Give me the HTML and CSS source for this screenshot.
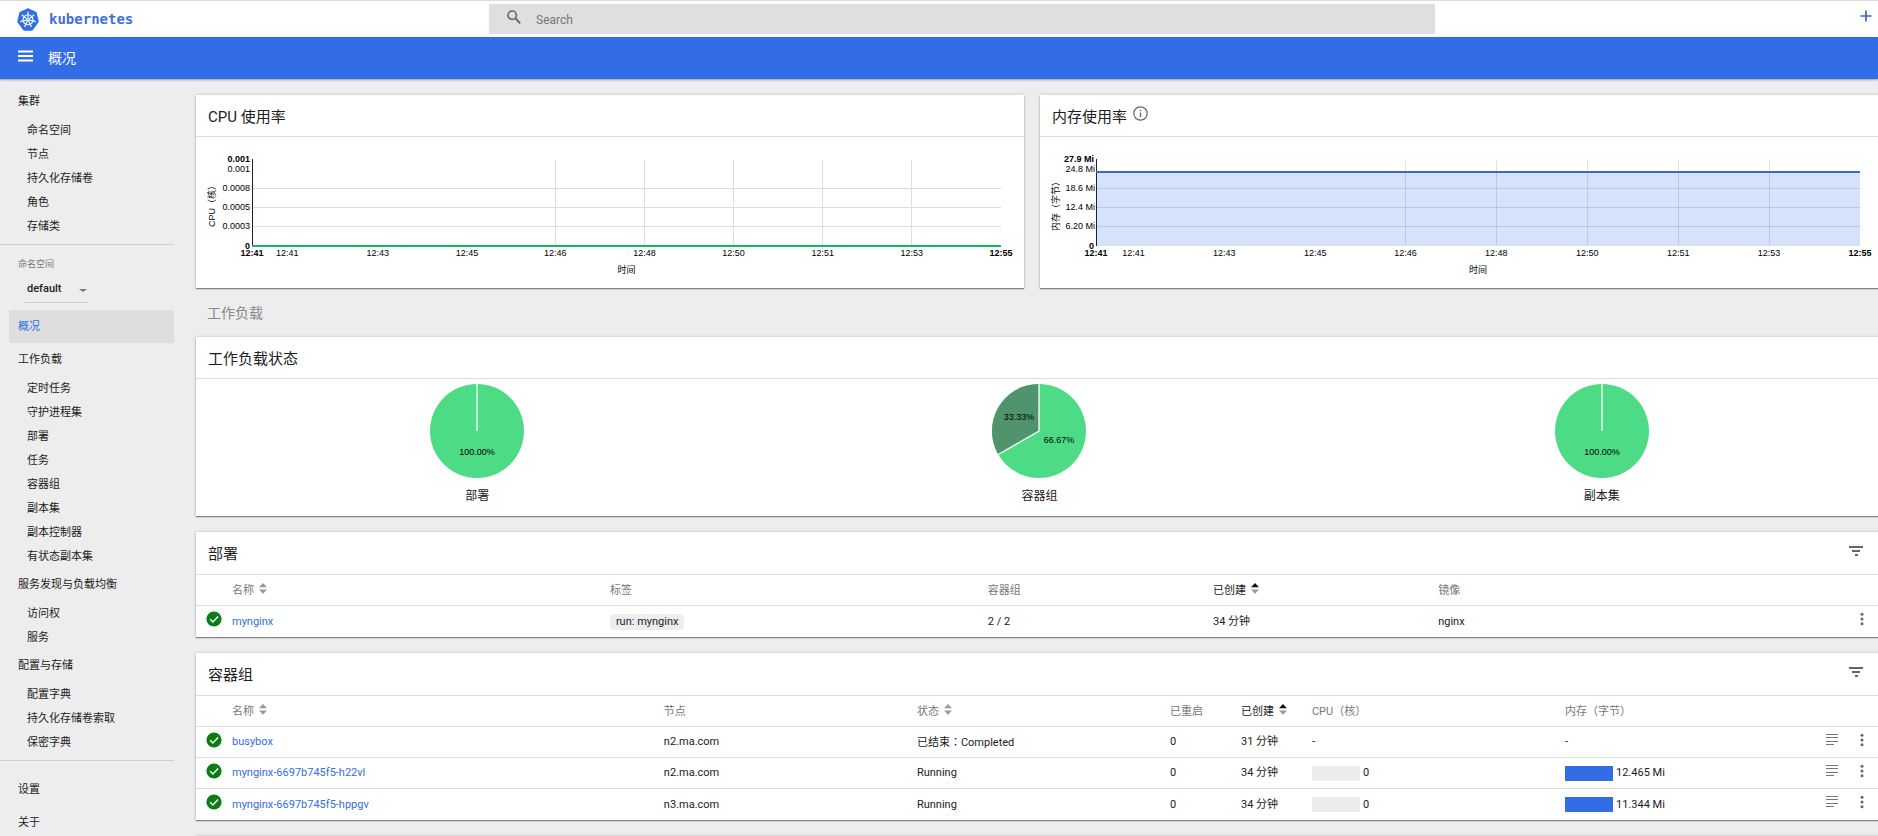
FILE: index.html
```html
<!DOCTYPE html>
<html lang="zh-CN">
<head>
<meta charset="utf-8">
<title>概况 - Kubernetes Dashboard</title>
<link rel="stylesheet" href="styles.css">
</head>
<body>
<svg class="defs" aria-hidden="true">
  <symbol id="i-sort" viewBox="0 0 8 11"><path d="M0 4.2 4 0l4 4.2z"/><path d="M0 6.6h8L4 10.8z"/></symbol>
  <symbol id="i-sort-up" viewBox="0 0 8 11"><path d="M0 4.2 4 0l4 4.2z" fill="#111"/><path d="M0 6.6h8L4 10.8z"/></symbol>
  <symbol id="i-ok" viewBox="0 0 16 16"><circle cx="8" cy="8" r="7.6" fill="#0b7d14"/><path d="M4.2 8.3 6.9 11l5.2-5.4" fill="none" stroke="#fff" stroke-width="1.5"/></symbol>
  <symbol id="i-more" viewBox="0 0 14 14"><g fill="#666"><circle cx="7" cy="2.2" r="1.5"/><circle cx="7" cy="7" r="1.5"/><circle cx="7" cy="11.8" r="1.5"/></g></symbol>
  <symbol id="i-logs" viewBox="0 0 14 14"><path d="M1 1.5h12M1 4.5h12M1 8.5h12M1 11.5h8" stroke="#777" fill="none"/></symbol>
  <symbol id="i-filter" viewBox="0 0 14 14"><path d="M0 3h14M3 7h8M6 11h3" stroke="#666" stroke-width="1.8" fill="none"/></symbol>
</svg>
<div class="app">
  <header class="topbar">
    <a class="brand" href="#">
      <svg class="logo" viewBox="0 0 22 23" aria-hidden="true">
        <path d="M11 .8 19 4.6 21.2 13.6 15.6 21.4Q15 22.2 14 22.2H8Q7 22.2 6.4 21.4L.8 13.6 3 4.6Z" fill="#326de6" stroke="#326de6" stroke-width="1.2" stroke-linejoin="round"/>
        <g stroke="#fff" fill="none" stroke-width="1.1"><circle cx="11" cy="11.8" r="5"/><path d="M11 3.8v6.5M4.8 6.8l5.1 4.1M3.2 13.6l6.4-1.5M7.5 19l2.9-5.9M14.5 19l-2.9-5.9M18.8 13.6l-6.4-1.5M17.2 6.8l-5.1 4.1"/></g>
        <circle cx="11" cy="11.8" r="1.6" fill="#fff"/><circle cx="11" cy="11.8" r=".6" fill="#326de6"/>
      </svg>
      <span>kubernetes</span>
    </a>
    <label class="search">
      <svg viewBox="0 0 14 14" aria-hidden="true"><g fill="none" stroke="#6b6b6b" stroke-width="1.7"><circle cx="5.2" cy="5.2" r="4.2"/><path d="M8.3 8.3 13.2 13.2" stroke-width="2"/></g></svg>
      <input type="search" placeholder="Search" aria-label="Search">
    </label>
    <button class="create" type="button" aria-label="创建"><svg viewBox="0 0 12 12" aria-hidden="true"><path d="M6 .5v11M.5 6h11" stroke="#3764c8" stroke-width="1.7"/></svg></button>
  </header>
  <div class="titlebar">
    <button class="burger" type="button" aria-label="菜单"><svg viewBox="0 0 15 12"><path d="M0 1.5h15M0 6h15M0 10.5h15" stroke="#fff" stroke-width="2"/></svg></button>
    <h1>概况</h1>
  </div>
  <div class="body">
    <nav class="side">
      <a class="group" href="#">集群</a>
      <a class="item" href="#">命名空间</a>
      <a class="item" href="#">节点</a>
      <a class="item" href="#">持久化存储卷</a>
      <a class="item" href="#">角色</a>
      <a class="item" href="#">存储类</a>
      <hr>
      <div class="ns">
        <label for="ns">命名空间</label>
        <div class="select"><select id="ns"><option>default</option></select></div>
      </div>
      <a class="group active" href="#">概况</a>
      <a class="group" href="#">工作负载</a>
      <a class="item" href="#">定时任务</a>
      <a class="item" href="#">守护进程集</a>
      <a class="item" href="#">部署</a>
      <a class="item" href="#">任务</a>
      <a class="item" href="#">容器组</a>
      <a class="item" href="#">副本集</a>
      <a class="item" href="#">副本控制器</a>
      <a class="item" href="#">有状态副本集</a>
      <a class="group" href="#">服务发现与负载均衡</a>
      <a class="item" href="#">访问权</a>
      <a class="item" href="#">服务</a>
      <a class="group" href="#">配置与存储</a>
      <a class="item" href="#">配置字典</a>
      <a class="item" href="#">持久化存储卷索取</a>
      <a class="item" href="#">保密字典</a>
      <hr class="last">
      <a class="group" href="#">设置</a>
      <a class="group" href="#">关于</a>
    </nav>
    <main class="main">
      <div class="charts">
        <section class="card">
          <header class="head"><h2>CPU 使用率</h2></header>
          <svg class="chart">
            <text class="mid" transform="translate(19 67) rotate(-90)">CPU（核）</text>
            <g class="ylab">
              <text class="b" x="54" y="25">0.001</text><text x="54" y="35">0.001</text><text x="54" y="54">0.0008</text><text x="54" y="73">0.0005</text><text x="54" y="92">0.0003</text><text class="b" x="54" y="112">0</text>
            </g>
            <svg class="plot" x="56" y="0">
              <g class="grid">
                <line x1="0" x2="100%" y1="51.5" y2="51.5"/><line x1="0" x2="100%" y1="70.5" y2="70.5"/><line x1="0" x2="100%" y1="89.5" y2="89.5"/>
                <line x1="40.5%" x2="40.5%" y1="23" y2="108"/><line x1="52.4%" x2="52.4%" y1="23" y2="108"/><line x1="64.3%" x2="64.3%" y1="23" y2="108"/><line x1="76.2%" x2="76.2%" y1="23" y2="108"/><line x1="88.1%" x2="88.1%" y1="23" y2="108"/>
              </g>
              <rect class="axis" width="1" height="87" y="22"/>
              <rect width="100%" height="2" y="108" fill="#12bb60"/>
              <g class="mid">
                <text class="b" x="0" y="119">12:41</text><text x="4.7%" y="119">12:41</text><text x="16.8%" y="119">12:43</text><text x="28.7%" y="119">12:45</text><text x="40.5%" y="119">12:46</text><text x="52.4%" y="119">12:48</text><text x="64.3%" y="119">12:50</text><text x="76.2%" y="119">12:51</text><text x="88.1%" y="119">12:53</text><text class="b" x="100%" y="119">12:55</text>
                <text x="50%" y="136">时间</text>
              </g>
            </svg>
          </svg>
        </section>
        <section class="card">
          <header class="head"><h2>内存使用率</h2>
            <svg class="info" viewBox="0 0 15 15" aria-hidden="true"><circle cx="7.5" cy="7.5" r="6.7" fill="none" stroke="#666" stroke-width="1.2"/><path d="M7.5 6.5v4.7M7.5 3.8v1.5" stroke="#666" stroke-width="1.3"/></svg>
          </header>
          <svg class="chart">
            <text class="mid" transform="translate(19 67) rotate(-90)">内存（字节）</text>
            <g class="ylab">
              <text class="b" x="54" y="25">27.9 Mi</text><text x="55" y="35">24.8 Mi</text><text x="55" y="54">18.6 Mi</text><text x="55" y="73">12.4 Mi</text><text x="55" y="92">6.20 Mi</text><text class="b" x="54" y="112">0</text>
            </g>
            <svg class="plot" x="56" y="0">
              <rect width="100%" height="74" y="35" fill="#d6e2fa"/>
              <g class="grid dark">
                <line x1="0" x2="100%" y1="51.5" y2="51.5"/><line x1="0" x2="100%" y1="70.5" y2="70.5"/><line x1="0" x2="100%" y1="89.5" y2="89.5"/>
                <line x1="40.5%" x2="40.5%" y1="23" y2="108"/><line x1="52.4%" x2="52.4%" y1="23" y2="108"/><line x1="64.3%" x2="64.3%" y1="23" y2="108"/><line x1="76.2%" x2="76.2%" y1="23" y2="108"/><line x1="88.1%" x2="88.1%" y1="23" y2="108"/>
              </g>
              <rect class="axis" width="1" height="87" y="22"/>
              <rect width="100%" height="2" y="34" fill="#3a68cc"/>
              <g class="mid">
                <text class="b" x="0" y="119">12:41</text><text x="4.9%" y="119">12:41</text><text x="16.8%" y="119">12:43</text><text x="28.7%" y="119">12:45</text><text x="40.5%" y="119">12:46</text><text x="52.4%" y="119">12:48</text><text x="64.3%" y="119">12:50</text><text x="76.2%" y="119">12:51</text><text x="88.1%" y="119">12:53</text><text class="b" x="100%" y="119">12:55</text>
                <text x="50%" y="136">时间</text>
              </g>
            </svg>
          </svg>
        </section>
      </div>
      <h2 class="section">工作负载</h2>
      <section class="card">
        <header class="head"><h2>工作负载状态</h2></header>
        <div class="pies">
          <figure>
            <svg class="pie" viewBox="0 0 94 94"><circle cx="47" cy="47" r="47" fill="#4ddb85"/><path d="M47 0V47" stroke="#fff" stroke-width="1.3"/><text x="47" y="71">100.00%</text></svg>
            <figcaption>部署</figcaption>
          </figure>
          <figure>
            <svg class="pie" viewBox="0 0 94 94"><circle cx="47" cy="47" r="47" fill="#4ddb85"/><path d="M47 47V0A47 47 0 0 0 6.3 70.5Z" fill="#4f946d"/><path d="M47 0V47L6.3 70.5" fill="none" stroke="#fff" stroke-width="1.3"/><text x="27" y="36">33.33%</text><text x="67" y="59">66.67%</text></svg>
            <figcaption>容器组</figcaption>
          </figure>
          <figure>
            <svg class="pie" viewBox="0 0 94 94"><circle cx="47" cy="47" r="47" fill="#4ddb85"/><path d="M47 0V47" stroke="#fff" stroke-width="1.3"/><text x="47" y="71">100.00%</text></svg>
            <figcaption>副本集</figcaption>
          </figure>
        </div>
      </section>
      <section class="card">
        <header class="head tall"><h2>部署</h2><button class="icon" type="button" aria-label="筛选"><svg><use href="#i-filter"/></svg></button></header>
        <table>
          <colgroup><col class="c-icon"><col class="c-d1"><col class="c-d1"><col class="c-d2"><col class="c-d2"><col><col class="c-act"></colgroup>
          <thead><tr><th></th><th><button type="button" class="sort">名称<svg><use href="#i-sort"/></svg></button></th><th>标签</th><th>容器组</th><th><button type="button" class="sort on">已创建<svg><use href="#i-sort-up"/></svg></button></th><th>镜像</th><th></th></tr></thead>
          <tbody><tr><td><svg class="ok"><use href="#i-ok"/></svg></td><td><a href="#">mynginx</a></td><td><span class="chip">run: mynginx</span></td><td>2 / 2</td><td>34 分钟</td><td>nginx</td><td><div class="acts"><button class="icon" type="button" aria-label="更多"><svg><use href="#i-more"/></svg></button></div></td></tr></tbody>
        </table>
      </section>
      <section class="card">
        <header class="head tall"><h2>容器组</h2><button class="icon" type="button" aria-label="筛选"><svg><use href="#i-filter"/></svg></button></header>
        <table>
          <colgroup><col class="c-icon"><col class="c-name"><col class="c-wide"><col class="c-wide"><col class="c-slim"><col class="c-slim"><col class="c-wide"><col class="c-wide"><col></colgroup>
          <thead><tr><th></th><th><button type="button" class="sort">名称<svg><use href="#i-sort"/></svg></button></th><th>节点</th><th><button type="button" class="sort">状态<svg><use href="#i-sort"/></svg></button></th><th>已重启</th><th><button type="button" class="sort on">已创建<svg><use href="#i-sort-up"/></svg></button></th><th>CPU（核）</th><th>内存（字节）</th><th></th></tr></thead>
          <tbody>
            <tr><td><svg class="ok"><use href="#i-ok"/></svg></td><td><a href="#">busybox</a></td><td>n2.ma.com</td><td>已结束<span lang="zh-Hant" class="punct">：</span>Completed</td><td>0</td><td>31 分钟</td><td>-</td><td>-</td><td><div class="acts"><button class="icon" type="button" aria-label="日志"><svg><use href="#i-logs"/></svg></button><button class="icon" type="button" aria-label="更多"><svg><use href="#i-more"/></svg></button></div></td></tr>
            <tr><td><svg class="ok"><use href="#i-ok"/></svg></td><td><a href="#">mynginx-6697b745f5-h22vl</a></td><td>n2.ma.com</td><td>Running</td><td>0</td><td>34 分钟</td><td><div class="use"><i class="bar"></i>0</div></td><td><div class="use"><i class="bar full"></i>12.465 Mi</div></td><td><div class="acts"><button class="icon" type="button" aria-label="日志"><svg><use href="#i-logs"/></svg></button><button class="icon" type="button" aria-label="更多"><svg><use href="#i-more"/></svg></button></div></td></tr>
            <tr><td><svg class="ok"><use href="#i-ok"/></svg></td><td><a href="#">mynginx-6697b745f5-hppgv</a></td><td>n3.ma.com</td><td>Running</td><td>0</td><td>34 分钟</td><td><div class="use"><i class="bar"></i>0</div></td><td><div class="use"><i class="bar full"></i>11.344 Mi</div></td><td><div class="acts"><button class="icon" type="button" aria-label="日志"><svg><use href="#i-logs"/></svg></button><button class="icon" type="button" aria-label="更多"><svg><use href="#i-more"/></svg></button></div></td></tr>
          </tbody>
        </table>
      </section>
      <section class="card"><header class="head tall"></header></section>
    </main>
  </div>
</div>
</body>
</html>
```
FILE: styles.css
```css
* { box-sizing: border-box; }
body {
  margin: 0;
  background: #ededed;
  color: #212121;
  font: 11px/16px Roboto, "Noto Sans CJK SC", sans-serif;
}
a { color: inherit; text-decoration: none; }
button { border: 0; padding: 0; background: none; font: inherit; color: inherit; display: block; cursor: pointer; }
h1, h2, figure { margin: 0; font-weight: 400; }
svg { display: block; }
.defs { width: 0; height: 0; position: absolute; }
.app { height: 100vh; overflow: hidden; }
.punct { font-family: "Noto Sans CJK TC", sans-serif; }

.topbar {
  display: grid;
  grid-template-columns: 489fr 946fr 443fr;
  height: 37px;
  padding: 3px 0;
  background: #fff;
  border-top: 1px solid #ddd;
}
.brand {
  display: flex;
  align-items: center;
  gap: 10px;
  padding-left: 17px;
  color: #3f6fd9;
  font: bold 14px/20px "DejaVu Sans Mono", monospace;
}
.logo { width: 22px; height: 23px; }
.search {
  display: flex;
  background: #dfdfdf;
  padding-left: 18px;
  gap: 15px;
}
.search svg { width: 14px; height: 14px; margin-top: 6px; }
.search input {
  flex: 1;
  border: 0;
  padding: 1px 0 0;
  background: none;
  outline: 0;
  font: 12px/16px Roboto, sans-serif;
}
.search input::placeholder { color: #777; }
.create {
  display: flex;
  justify-content: flex-end;
  align-items: center;
  padding: 0 6px 6px 0;
}
.create svg { width: 12px; height: 12px; }

.titlebar {
  position: relative;
  display: flex;
  align-items: center;
  gap: 15px;
  height: 42px;
  padding-left: 18px;
  background: #326de6;
  color: #fff;
  box-shadow: 0 1px 2px rgba(0, 0, 0, .35);
}
.burger { padding-bottom: 4px; }
.burger svg { width: 15px; height: 12px; }
.titlebar h1 { font-size: 14px; line-height: 20px; }

.body { display: flex; }
.side { width: 174px; flex: none; padding-top: 6px; }
.side a { display: block; }
.group { padding: 9px 0 8px 18px; }
.item { padding: 5px 0 3px 27px; }
.active { margin-left: 9px; padding-left: 9px; background: #dedede; color: #326de6; }
.side hr { margin: 6px 0 0; border: 0; border-top: 1px solid #cfcfcf; }
.side hr.last { margin-bottom: 12px; }
.ns { height: 65px; padding: 11px 0 0 18px; }
.ns label { display: block; font-size: 9px; color: #777; }
.select { position: relative; width: 63px; margin: 4px 0 0 7px; border-bottom: 1px solid #ccc; }
.select select {
  display: block;
  width: 100%;
  height: 26px;
  appearance: none;
  border: 0;
  padding: 0 0 1px 2px;
  background: none;
  color: #212121;
  font: 500 11px/16px Roboto, sans-serif;
}
.select::after {
  content: "";
  position: absolute;
  right: 1px;
  top: 13px;
  border: 4px solid transparent;
  border-top: 3px solid #777;
  border-bottom: 0;
}

.main { flex: 1; min-width: 0; margin-right: -5px; padding: 16px 0 0 22px; }
.card { background: #fff; box-shadow: 0 1px 1px rgba(0, 0, 0, .4), 0 0 3px rgba(0, 0, 0, .2); }
.card + .card { margin-top: 16px; }
.charts { display: grid; grid-template-columns: 828fr 843fr; gap: 16px; }
.charts .card { margin: 0; }
.head {
  display: flex;
  align-items: center;
  height: 42px;
  padding: 2px 20px 0 12px;
  border-bottom: 1px solid #ddd;
}
.head.tall { height: 43px; }
.head h2 { font-size: 15px; line-height: 20px; }
.head .icon { margin: 0 0 7px auto; }
.info { width: 15px; height: 15px; margin: 0 0 6px 6px; }
.chart { width: 100%; height: 151px; font: 9px "Liberation Sans", "Noto Sans CJK SC", sans-serif; fill: #000; }
.plot { width: calc(100% - 79px); height: 151px; overflow: visible; }
.ylab { text-anchor: end; }
.mid { text-anchor: middle; }
.b { font-weight: bold; }
.grid line { stroke: #ddd; shape-rendering: crispEdges; }
.grid.dark line { stroke: rgba(60, 60, 120, .16); }
.axis { fill: #222; shape-rendering: crispEdges; }
.section { padding: 15px 0 14px 11px; font-size: 14px; line-height: 20px; color: #888; }
.pies { display: grid; grid-template-columns: repeat(3, 1fr); height: 137px; padding-top: 5px; text-align: center; }
.pie { width: 94px; height: 94px; margin: 0 auto 10px; }
.pie text { font: 9px "Liberation Sans", sans-serif; text-anchor: middle; }
.pies figcaption { font-size: 12px; }

table { width: 100%; table-layout: fixed; border-collapse: separate; border-spacing: 0; }
th, td { height: 31px; padding: 0; text-align: left; font-weight: 400; white-space: nowrap; border-bottom: 1px solid #ddd; }
th { padding-top: 1px; color: #777; }
tr:last-child td { border-bottom: 0; }
td a { color: #326de6; }
.c-icon { width: 36px; }
.c-d1 { width: 22.4%; }
.c-d2 { width: 13.35%; }
.c-act { width: 35px; }
.c-name { width: 25.6%; }
.c-wide { width: 15%; }
.c-slim { width: 71px; }
.sort { display: flex; align-items: center; gap: 5px; }
.sort svg { width: 8px; height: 11px; margin-bottom: 5px; fill: #999; }
.sort.on { color: #212121; }
.ok { width: 16px; height: 16px; margin: 0 0 5px 10px; }
.icon svg { width: 14px; height: 14px; }
.acts { display: flex; justify-content: flex-end; gap: 16px; padding: 0 14px 5px 0; }
.chip { display: inline-block; padding: 0 6px; border-radius: 4px; background: #eee; }
.use { display: flex; align-items: center; gap: 3px; }
.bar { width: 48px; height: 15px; background: #ececec; }
.bar.full { background: #326de6; }
```
